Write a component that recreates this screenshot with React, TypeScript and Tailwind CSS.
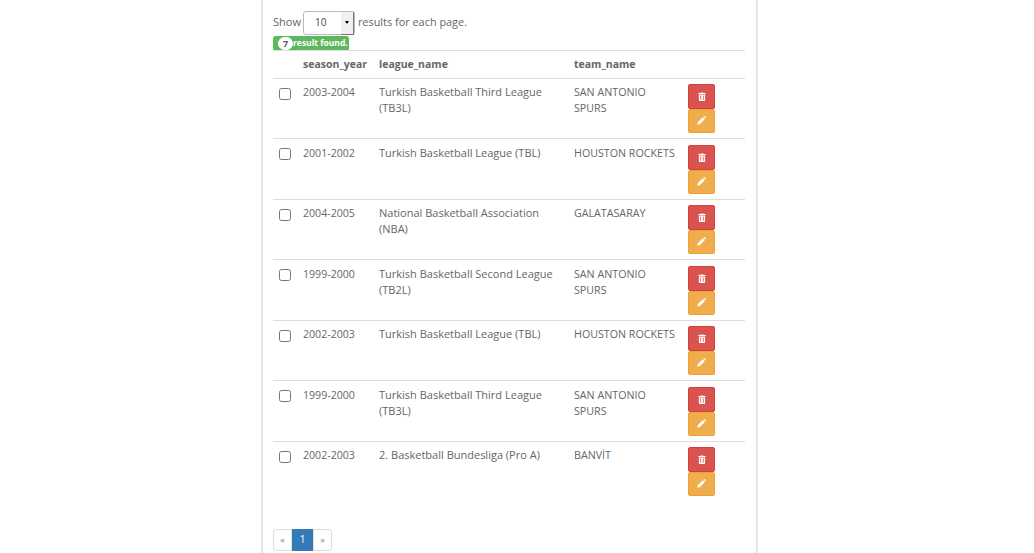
const rows = [
  ["2003-2004", "Turkish Basketball Third League (TB3L)", "SAN ANTONIO SPURS"],
  ["2001-2002", "Turkish Basketball League (TBL)", "HOUSTON ROCKETS"],
  ["2004-2005", "National Basketball Association (NBA)", "GALATASARAY"],
  ["1999-2000", "Turkish Basketball Second League (TB2L)", "SAN ANTONIO SPURS"],
  ["2002-2003", "Turkish Basketball League (TBL)", "HOUSTON ROCKETS"],
  ["1999-2000", "Turkish Basketball Third League (TB3L)", "SAN ANTONIO SPURS"],
  ["2002-2003", "2. Basketball Bundesliga (Pro A)", "BANVİT"],
] as const;

function Trash() {
  return (
    <svg width="8" height="9" viewBox="0 0 9 10" fill="none">
      <path d="M3 1.2V.4h3v.8h2.6v1H.4v-1z" fill="#fff" />
      <path fillRule="evenodd" d="M1 2.8h7V9a1 1 0 0 1-1 1H2a1 1 0 0 1-1-1zM2.6 4v4.6h.9V4zm2.9 0v4.6h.9V4z" fill="#fff" />
    </svg>
  );
}

function Pencil() {
  return (
    <svg width="9" height="9" viewBox="0 0 10 10">
      <path d="M0.4 9.6l.6-2.8L6.4 1.4l2.2 2.2L3.2 9z" fill="#fff" />
      <path d="M7 .8l.6-.5a.8.8 0 0 1 1 0l1 1a.8.8 0 0 1 0 1l-.5.6z" fill="#fff" />
    </svg>
  );
}

export default function App() {
  return (
    <div className="h-[553px] overflow-hidden bg-white font-['Open_Sans','Noto_Sans',sans-serif] text-[11px] text-[#666666]">
      <div className="ml-[261px] h-full w-[497px] border-x-2 border-[#e6e6e6] px-[10px] pt-[11px]">
        <div className="flex h-[23px] items-center">
          <span className="mr-[2px]">Show</span>
          <div className="relative flex h-[24px] w-[52px] items-center rounded-[3px] border border-[#bbbbbb] bg-white pl-[11px] text-[10px] text-[#444]">
            10
            <div className="absolute right-0 top-0 flex h-[23px] w-[13px] items-center justify-center border-b border-r border-[#777] bg-[#f0f0f0]">
              <div className="h-0 w-0 border-x-[2.5px] border-t-[3px] border-x-transparent border-t-black" />
            </div>
          </div>
          <span className="ml-[3px] text-[10.9px]">results for each page.</span>
        </div>
        <div className="mt-[2px] flex h-[15px] w-[76px] items-center rounded-[3px] bg-[#5cb85c] pl-[5px] text-[8.5px] font-bold text-white">
          <span className="flex h-[13px] w-[15px] items-center justify-center rounded-full bg-white text-[9px] text-[#555]">7</span>
          <span>result found.</span>
        </div>
        <table className="-mt-px w-[472px] table-fixed border-collapse">
          <thead>
            <tr className="h-[28px] border-y border-[#dddddd] text-left text-[10.5px]">
              <th className="w-[24px]" />
              <th className="w-[76px] pl-[6px] font-bold">season_year</th>
              <th className="w-[195px] pl-[6px] font-bold">league_name</th>
              <th className="w-[114px] pl-[6px] font-bold">team_name</th>
              <th />
            </tr>
          </thead>
          <tbody>
            {rows.map((r, i) => {
              const pad = i % 2 ? "pt-[6px]" : "pt-[5px]";
              return (
                <tr key={i} className={"border-b border-[#dddddd] align-top last:border-b-0 " + (i % 2 ? "h-[61px]" : "h-[60px]")}>
                  <td className="pl-[6px] pt-[9px]">
                    <div className="h-[12px] w-[12px] rounded-[2.5px] border border-[#767676] bg-white" />
                  </td>
                  <td className={"pl-[6px] text-[10.6px] leading-[16px] " + pad}>{r[0]}</td>
                  <td className={"pl-[6px] pr-[12px] leading-[16px] " + pad}>{r[1]}</td>
                  <td className={"pl-[6px] pr-[5px] text-[10.7px] leading-[16px] " + pad}>{r[2]}</td>
                  <td className={"pl-[6px] " + pad}>
                    <div className="flex h-[24.5px] w-[27px] items-center justify-center rounded-[2px] border border-[#d43f3a] bg-[#d9534f]"><Trash /></div>
                    <div className="flex h-[24.5px] w-[27px] items-center justify-center rounded-[2px] border border-[#eea236] bg-[#f0ad4e]"><Pencil /></div>
                  </td>
                </tr>
              );
            })}
          </tbody>
        </table>
        <div className="mt-[27px] flex h-[22px] w-[59px] text-[9px]">
          <span className="flex w-[19px] items-center justify-center rounded-l-[3px] border border-[#dddddd] text-[#888]">«</span>
          <span className="flex w-[21px] items-center justify-center bg-[#337ab7] text-[10px] text-white">1</span>
          <span className="flex w-[19px] items-center justify-center rounded-r-[3px] border border-[#dddddd] text-[#888]">»</span>
        </div>
      </div>
    </div>
  );
}
